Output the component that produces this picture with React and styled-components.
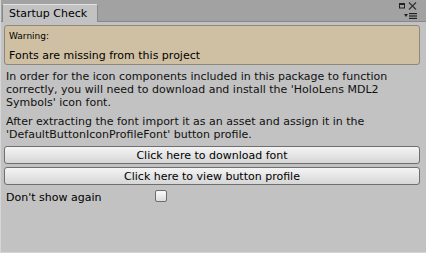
import React from "react";
import styled, { createGlobalStyle } from "styled-components";

const Global = createGlobalStyle`
  html, body { margin: 0; padding: 0; background: #c2c2c2; }
  body { font-family: "DejaVu Sans", Verdana, sans-serif; font-size: 11px; color: #000; }
`;

const Window = styled.div`
  width: 426px;
  height: 253px;
  display: flex;
  flex-direction: column;
  background: #c2c2c2;
  box-sizing: border-box;
  border-left: 1px solid #d6d6d6;
  border-bottom: 1px solid #d6d6d6;
  overflow: hidden;
`;

const TabBar = styled.div`
  height: 22px;
  background: #a2a2a2;
  display: flex;
  align-items: flex-end;
  padding-left: 1px;
  position: relative;
  border-bottom: 1px solid #888;
  box-sizing: border-box;
`;

const Tab = styled.div`
  height: 17px;
  margin-bottom: -1px;
  padding: 0 10px 0 6px;
  background: #c2c2c2;
  border: 1px solid #888;
  border-bottom: none;
  border-top-color: #e2e2e2;
  border-radius: 2px 2px 0 0;
  display: flex;
  align-items: center;
  font-size: 11px;
`;

const Controls = styled.div`
  position: absolute;
  right: 9px;
  top: 2px;
  display: flex;
  flex-direction: column;
  align-items: flex-end;
  gap: 2px;
`;

const Body = styled.div`
  flex: 1;
  display: flex;
  flex-direction: column;
  padding: 3px 6px 0 3px;
`;

const WarningBox = styled.div`
  background: #cfc0a3;
  border: 1px solid #8f8778;
  border-radius: 3px;
  padding: 5px 6px 4px 4px;
  display: flex;
  flex-direction: column;
  gap: 7px;
  height: 40px;
  box-sizing: border-box;
`;

const WarnTitle = styled.div`
  font-size: 9px;
  line-height: 11px;
`;

const WarnText = styled.div`
  font-size: 11px;
  line-height: 13px;
`;

const Para = styled.p`
  margin: ${(p) => p.$mt}px 2px 0 2px;
  font-size: 11px;
  line-height: 13px;
  color: #101010;
`;

const Button = styled.button`
  margin-top: ${(p) => p.$mt}px;
  height: 18px;
  width: 100%;
  font-family: inherit;
  font-size: 11px;
  color: #000;
  border: 1px solid #6f6f6f;
  border-radius: 3px;
  background: linear-gradient(#f4f4f4, #d6d6d6);
  padding: 0;
  display: flex;
  align-items: center;
  justify-content: center;
`;

const Row = styled.div`
  display: flex;
  align-items: center;
  margin-top: 4px;
  padding-left: 2px;
  height: 16px;
`;

const Label = styled.span`
  width: 149px;
`;

const Check = styled.span`
  width: 10px;
  height: 10px;
  margin-top: -2px;
  border: 1px solid #6d6d6d;
  border-radius: 2px;
  background: linear-gradient(#fbfbfb, #dcdcdc);
`;

export default function App() {
  return (
    <>
      <Global />
      <Window>
        <TabBar>
          <Tab>Startup Check</Tab>
          <Controls>
            <svg width="18" height="9" viewBox="0 0 18 9">
              <rect x="0.5" y="2" width="5" height="4" fill="none" stroke="#222" strokeWidth="1" />
              <rect x="0" y="1" width="6" height="2" fill="#222" />
              <path d="M10 0.5 L17 7.5 M17 0.5 L10 7.5" stroke="#333" strokeWidth="1.2" />
            </svg>
            <svg width="13" height="6" viewBox="0 0 13 6">
              <path d="M0 1 L4 1 L2 4 Z" fill="#222" />
              <rect x="5" y="0" width="8" height="1.2" fill="#222" />
              <rect x="5" y="2.4" width="8" height="1.2" fill="#222" />
              <rect x="5" y="4.8" width="8" height="1.2" fill="#222" />
            </svg>
          </Controls>
        </TabBar>
        <Body>
          <WarningBox>
            <WarnTitle>Warning:</WarnTitle>
            <WarnText>Fonts are missing from this project</WarnText>
          </WarningBox>
          <Para $mt={5}>
            In order for the icon components included in this package to function correctly, you will need to download and install the 'HoloLens MDL2 Symbols' icon font.
          </Para>
          <Para $mt={6}>
            After extracting the font import it as an asset and assign it in the 'DefaultButtonIconProfileFont' button profile.
          </Para>
          <Button $mt={5}>Click here to download font</Button>
          <Button $mt={3}>Click here to view button profile</Button>
          <Row>
            <Label>Don't show again</Label>
            <Check />
          </Row>
        </Body>
      </Window>
    </>
  );
}
